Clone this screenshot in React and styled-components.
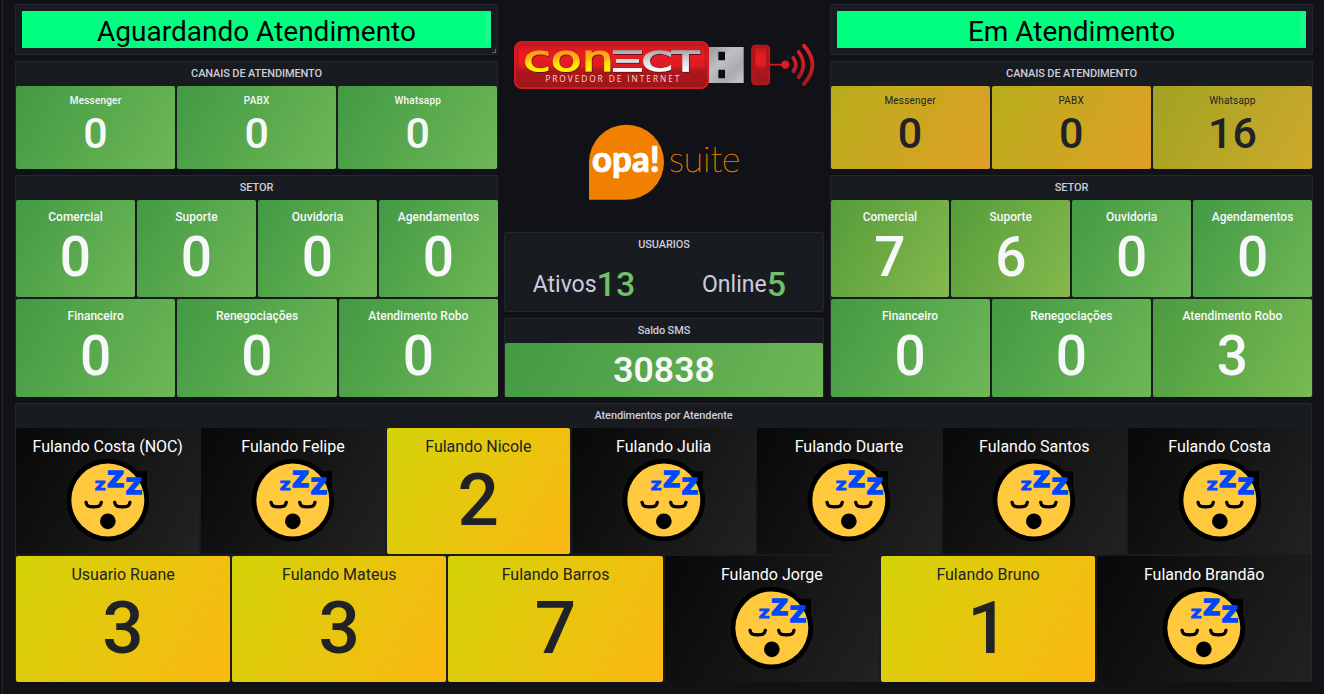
import React from "react";
import styled, { createGlobalStyle } from "styled-components";

const GlobalStyle = createGlobalStyle`
  * { box-sizing: border-box; }
  body {
    margin: 0;
    background: #111217;
    font-family: Roboto, "Liberation Sans", sans-serif;
    color: #ccccdc;
    overflow: hidden;
  }
`;

const Page = styled.div`
  width: 1324px;
  height: 694px;
  padding-left: 2px;
`;

const Board = styled.main`
  height: 694px;
  padding: 4px 0 0 12px;
  border-left: 1px solid #25272c;
  display: flex;
  flex-direction: column;
  gap: 6px;
`;

const Columns = styled.div`
  display: flex;
  gap: 6px;
  height: 393px;
`;

const Column = styled.section`
  width: ${(p) => p.$width}px;
  display: flex;
  flex-direction: column;
  gap: 6px;
`;

const Panel = styled.section`
  position: relative;
  height: ${(p) => p.$height}px;
  width: ${(p) => (p.$width ? `${p.$width}px` : "auto")};
  border: 1px solid #25272c;
  border-bottom-width: ${(p) => (p.$flush ? 0 : 1)}px;
  border-radius: 2px;
  background: #181b1f;
  display: flex;
  flex-direction: column;
`;

const PanelTitle = styled.h2`
  margin: 0;
  height: 24px;
  flex: none;
  font-size: 11px;
  font-weight: 500;
  line-height: 23px;
  letter-spacing: -0.13px;
  text-align: center;
`;

const BannerPanel = styled(Panel)`
  padding: 6px;
`;

const Banner = styled.h1`
  position: relative;
  margin: 0;
  height: 37px;
  background: #00ff80;
  color: #000;
  font-size: 28px;
  font-weight: 400;
  line-height: 41px;
  text-align: center;
`;

const ScrollThumb = styled.span`
  position: absolute;
  right: 0;
  top: 2px;
  width: 6px;
  height: 30px;
  border-radius: 2px;
  background: rgba(204, 204, 220, 0.14);
`;

const ResizeHandle = styled.span`
  position: absolute;
  right: 1px;
  bottom: 1px;
  width: 4px;
  height: 4px;
  border-right: 1px solid #6b6c72;
  border-bottom: 1px solid #6b6c72;
`;

const TileRows = styled.div`
  flex: 1;
  margin: 0 ${(p) => p.$bleed[1]}px 0 ${(p) => p.$bleed[0]}px;
  display: flex;
  flex-direction: column;
  gap: 2px;
`;

const TileRow = styled.div`
  flex: ${(p) => (p.$height ? `0 0 ${p.$height}px` : "1")};
  display: flex;
  gap: 2px;
`;

const tones = {
  green: ["#429a43", "#6fb757", "#f7f8fa"],
  leaf: ["#4a9b3f", "#79ba52", "#f7f8fa"],
  lime: ["#549c3b", "#85b94c", "#f7f8fa"],
  olive: ["#a0a323", "#cfa92b", "#202226"],
  amber: ["#b8ad1c", "#df9f26", "#202226"],
  yellow: ["#d3d307", "#fcb813", "#202226"],
  dark: ["#080808", "#222222", "#ffffff"],
};

const sizes = {
  sm: { label: 10, labelBox: 13, value: 43, valueBox: 52, spacing: 0.2, weight: 500 },
  md: { label: 12, labelBox: 18, value: 55, valueBox: 62, spacing: 0, weight: 500 },
  lg: { label: 16, labelBox: 21, value: 73, valueBox: 87, spacing: 0, weight: 400 },
};

const TileBox = styled.article`
  flex: 1 1 0;
  min-width: 0;
  padding-top: 8px;
  border-radius: 2px;
  background: linear-gradient(120deg, ${(p) => tones[p.$tone][0]}, ${(p) => tones[p.$tone][1]});
  color: ${(p) => tones[p.$tone][2]};
  display: flex;
  flex-direction: column;
  align-items: center;
`;

const TileLabel = styled.div`
  height: ${(p) => sizes[p.$size].labelBox}px;
  line-height: ${(p) => sizes[p.$size].labelBox}px;
  font-size: ${(p) => sizes[p.$size].label}px;
  font-weight: ${(p) => (p.$light ? sizes[p.$size].weight : 400)};
  letter-spacing: ${(p) => sizes[p.$size].spacing}px;
  white-space: nowrap;
`;

const TileValue = styled.div`
  height: ${(p) => sizes[p.$size].valueBox}px;
  line-height: ${(p) => sizes[p.$size].valueBox}px;
  font-size: ${(p) => sizes[p.$size].value}px;
  font-weight: 500;
`;

const EmojiSlot = styled.div`
  height: 85px;
  display: flex;
  align-items: center;
  justify-content: center;
`;

const LogoArea = styled.div`
  height: 222px;
  padding-top: 26px;
  display: flex;
  flex-direction: column;
  align-items: center;
  gap: 10px;
`;

const Stats = styled.div`
  height: 54px;
  display: flex;
`;

const Stat = styled.div`
  flex: 1;
  padding-left: ${(p) => p.$shift || 0}px;
  display: flex;
  align-items: center;
  justify-content: center;
`;

const StatName = styled.span`
  font-size: 23px;
  line-height: 55px;
`;

const StatNumber = styled.span`
  font-size: 34px;
  line-height: 54px;
  font-weight: 500;
  color: #73bf69;
`;

const Balance = styled.div`
  height: 54px;
  flex: none;
  border-radius: 2px 2px 0 0;
  background: linear-gradient(120deg, #429a43, #6fb757);
  color: #f7f8fa;
  font-size: 35.500px;
  font-weight: 600;
  line-height: 54px;
  text-align: center;
`;

function SleepingFace() {
  const z = {
    fontFamily: "DejaVu Sans",
    fontWeight: 700,
    fill: "#0048ff",
    stroke: "#0048ff",
    lengthAdjust: "spacingAndGlyphs",
  };
  return (
    <svg width="84" height="84" viewBox="47 22 252 252" aria-hidden="true">
      <circle cx="172.5" cy="148" r="124" fill="#000" />
      <path d="M222 62H290V142H240Z" fill="#000" />
      <circle cx="172.5" cy="148" r="109.5" fill="#ffc83d" />
      <g fill="none" stroke="#000" strokeWidth="10" strokeLinecap="round">
        <path d="M107 155C109 168 118 168.500 130 168.500S151 168 153 155" />
        <path d="M193 155C195 168 204 168.500 216 168.500S237 168 239 155" />
      </g>
      <circle cx="172.5" cy="212" r="23.5" fill="#000" />
      <text {...z} x="134" y="117" fontSize="38" textLength="31" strokeWidth="3.5">Z</text>
      <text {...z} x="171" y="108" fontSize="66" textLength="50" strokeWidth="5">Z</text>
      <text {...z} x="226" y="131" fontSize="66" textLength="49" strokeWidth="5">Z</text>
    </svg>
  );
}

function ConectLogo() {
  return (
    <svg width="318" height="70" viewBox="0 0 954 210" role="img" aria-label="Conect">
      <defs>
        <linearGradient id="shell" x1="0" y1="0" x2="0" y2="1">
          <stop offset="0" stopColor="#c8191e" />
          <stop offset="0.3" stopColor="#ec1c24" />
          <stop offset="0.52" stopColor="#dc1b22" />
          <stop offset="0.62" stopColor="#b0171c" />
          <stop offset="1" stopColor="#9c161a" />
        </linearGradient>
        <linearGradient id="metal" x1="0" y1="0" x2="1" y2="1">
          <stop offset="0" stopColor="#94969b" />
          <stop offset="0.4" stopColor="#bfc0c4" />
          <stop offset="0.7" stopColor="#a9abb0" />
          <stop offset="1" stopColor="#c8c9cc" />
        </linearGradient>
        <linearGradient id="gold" gradientUnits="userSpaceOnUse" x1="0" y1="62" x2="0" y2="126">
          <stop offset="0" stopColor="#ff9a18" />
          <stop offset="0.35" stopColor="#ffb310" />
          <stop offset="0.6" stopColor="#ffe600" />
          <stop offset="1" stopColor="#fff200" />
        </linearGradient>
        <linearGradient id="silver" gradientUnits="userSpaceOnUse" x1="0" y1="62" x2="0" y2="126">
          <stop offset="0" stopColor="#a6a8ac" />
          <stop offset="0.5" stopColor="#dcdde0" />
          <stop offset="1" stopColor="#ffffff" />
        </linearGradient>
        <linearGradient id="waves" gradientUnits="userSpaceOnUse" x1="0" y1="44" x2="0" y2="166">
          <stop offset="0" stopColor="#ee2027" />
          <stop offset="1" stopColor="#a3171b" />
        </linearGradient>
        <filter id="shade" x="-5%" y="-20%" width="110%" height="140%">
          <feDropShadow dx="2" dy="3" stdDeviation="1.500" floodColor="#4a0709" floodOpacity="0.8" />
        </filter>
      </defs>
      <rect x="604" y="51" width="112" height="108" fill="url(#metal)" />
      <path d="M640 65H660V91H640ZM640 119H660V145H640Z" fill="#0c0c0e" />
      <rect x="30" y="36" width="579" height="138" rx="20" fill="url(#shell)" stroke="#d3191f" strokeWidth="6" />
      <rect x="38" y="44" width="563" height="122" rx="15" fill="none" stroke="#a4161a" strokeWidth="6" opacity="0.45" />
      <rect x="741" y="47" width="52" height="116" rx="10" fill="#a8171b" stroke="#b5181d" strokeWidth="5" />
      <rect x="751" y="55" width="32" height="98" rx="4" fill="url(#shell)" />
      <path d="M795 104H835" stroke="#d01c22" strokeWidth="5" />
      <circle cx="841" cy="104" r="12.5" fill="#d81c22" />
      <g fill="none" stroke="url(#waves)" strokeWidth="11" strokeLinecap="round">
        <path d="M865 84Q880 104 865 124" />
        <path d="M881 66Q909 104 881 142" />
        <path d="M897 47Q948 104 897 162" />
      </g>
      <g fontFamily="DejaVu Sans" fontWeight="400" filter="url(#shade)">
        <text x="54" y="123" fontSize="105" textLength="272" lengthAdjust="spacingAndGlyphs" fill="url(#gold)" stroke="url(#gold)" strokeWidth="3">con</text>
        <text x="311" y="123" fontSize="80" textLength="110" lengthAdjust="spacingAndGlyphs" fill="url(#silver)" stroke="url(#silver)" strokeWidth="4">Ξ</text>
        <text x="410" y="123" fontSize="80" textLength="172" lengthAdjust="spacingAndGlyphs" fill="url(#silver)" stroke="url(#silver)" strokeWidth="4">CT</text>
      </g>
      <text x="121" y="157" fontFamily="Open Sans" fontSize="25" fill="#f6d6d7" textLength="402">PROVEDOR DE INTERNET</text>
    </svg>
  );
}

function OpaLogo() {
  return (
    <svg width="188" height="100" viewBox="0 0 564 300" role="img" aria-label="opa! suite">
      <path d="M57 269V157A112.500 112.500 0 1 1 169.500 269Z" fill="#f18000" />
      <text x="66" y="185" fontFamily="Lato" fontWeight="900" fontSize="110" fill="#fff" stroke="#fff" strokeWidth="2" strokeLinejoin="round" textLength="203" lengthAdjust="spacingAndGlyphs">opa!</text>
      <text x="297" y="185" fontFamily="Lato" fontWeight="100" fontSize="108" fill="#f18000" stroke="#f18000" strokeWidth="1.3" textLength="214" lengthAdjust="spacingAndGlyphs">suite</text>
    </svg>
  );
}

function Tile({ label, value, tone = "green", size }) {
  const light = tones[tone][2] !== "#202226";
  return (
    <TileBox $tone={tone}>
      <TileLabel $size={size} $light={light}>{label}</TileLabel>
      {value === undefined ? (
        <EmojiSlot><SleepingFace /></EmojiSlot>
      ) : (
        <TileValue $size={size}>{value}</TileValue>
      )}
    </TileBox>
  );
}

function TilePanel({ title, height, width, size, rows, firstRow, bleed = [0, 0] }) {
  return (
    <Panel $height={height} $width={width} $flush>
      <PanelTitle>{title}</PanelTitle>
      <TileRows $bleed={bleed}>
        {rows.map((row, i) => (
          <TileRow key={i} $height={i === 0 ? firstRow : undefined}>
            {row.map(([label, value, tone]) => (
              <Tile key={label} label={label} value={value} tone={tone} size={size} />
            ))}
          </TileRow>
        ))}
      </TileRows>
    </Panel>
  );
}

const waiting = {
  channels: [[["Messenger", 0], ["PABX", 0], ["Whatsapp", 0]]],
  sectors: [
    [["Comercial", 0], ["Suporte", 0], ["Ouvidoria", 0], ["Agendamentos", 0]],
    [["Financeiro", 0], ["Renegociações", 0], ["Atendimento Robo", 0]],
  ],
};

const active = {
  channels: [[["Messenger", 0, "amber"], ["PABX", 0, "amber"], ["Whatsapp", 16, "olive"]]],
  sectors: [
    [["Comercial", 7, "lime"], ["Suporte", 6, "lime"], ["Ouvidoria", 0], ["Agendamentos", 0]],
    [["Financeiro", 0], ["Renegociações", 0], ["Atendimento Robo", 3, "leaf"]],
  ],
};

const idle = (name) => [name, undefined, "dark"];
const busy = (name, n) => [name, n, "yellow"];

const agents = [
  [
    idle("Fulando Costa (NOC)"),
    idle("Fulando Felipe"),
    busy("Fulando Nicole", 2),
    idle("Fulando Julia"),
    idle("Fulando Duarte"),
    idle("Fulando Santos"),
    idle("Fulando Costa"),
  ],
  [
    busy("Usuario Ruane", 3),
    busy("Fulando Mateus", 3),
    busy("Fulando Barros", 7),
    idle("Fulando Jorge"),
    busy("Fulando Bruno", 1),
    idle("Fulando Brandão"),
  ],
];

function QueueColumn({ title, data, resizable, channelBleed, bleed }) {
  return (
    <Column $width={483}>
      <BannerPanel $height={51}>
        <Banner>
          {title}
          <ScrollThumb />
        </Banner>
        {resizable && <ResizeHandle />}
      </BannerPanel>
      <TilePanel title="CANAIS DE ATENDIMENTO" height={108} size="sm" rows={data.channels} bleed={channelBleed} />
      <TilePanel title="SETOR" height={222} size="md" rows={data.sectors} firstRow={97} bleed={bleed} />
    </Column>
  );
}

export default function App() {
  return (
    <Page>
      <GlobalStyle />
      <Board>
        <Columns>
          <QueueColumn
            title="Aguardando Atendimento"
            data={waiting}
            resizable
            channelBleed={[0, -0.4]}
            bleed={[0, -1]}
          />
          <Column $width={320}>
            <LogoArea>
              <ConectLogo />
              <OpaLogo />
            </LogoArea>
            <Panel $height={80}>
              <PanelTitle>USUARIOS</PanelTitle>
              <Stats>
                <Stat>
                  <StatName>Ativos</StatName>
                  <StatNumber>13</StatNumber>
                </Stat>
                <Stat $shift={2}>
                  <StatName>Online</StatName>
                  <StatNumber>5</StatNumber>
                </Stat>
              </Stats>
            </Panel>
            <Panel $height={79} $flush>
              <PanelTitle>Saldo SMS</PanelTitle>
              <Balance>30838</Balance>
            </Panel>
          </Column>
          <QueueColumn title="Em Atendimento" data={active} channelBleed={[-0.5, 0]} bleed={[-0.5, 0]} />
        </Columns>
        <TilePanel
          title="Atendimentos por Atendente"
          height={279}
          width={1297}
          size="lg"
          rows={agents}
          bleed={[0, -0.3]}
        />
      </Board>
    </Page>
  );
}
